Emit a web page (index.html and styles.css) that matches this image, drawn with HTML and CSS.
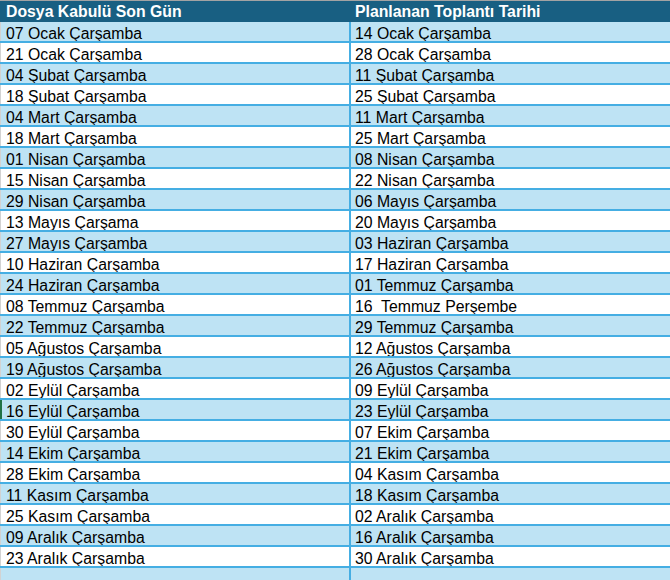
FILE: index.html
```html
<!DOCTYPE html>
<html lang="tr">
<head>
<meta charset="utf-8">
<link rel="stylesheet" href="styles.css">
</head>
<body>
<div class="sheet">
  <div class="row head">
    <div class="cell left">Dosya Kabulü Son Gün</div>
    <div class="cell right">Planlanan Toplantı Tarihi</div>
  </div>
  <div class="row alt"><div class="cell left">07 Ocak Çarşamba</div><div class="cell right">14 Ocak Çarşamba</div></div>
  <div class="row"><div class="cell left">21 Ocak Çarşamba</div><div class="cell right">28 Ocak Çarşamba</div></div>
  <div class="row alt"><div class="cell left">04 Şubat Çarşamba</div><div class="cell right">11 Şubat Çarşamba</div></div>
  <div class="row"><div class="cell left">18 Şubat Çarşamba</div><div class="cell right">25 Şubat Çarşamba</div></div>
  <div class="row alt"><div class="cell left">04 Mart Çarşamba</div><div class="cell right">11 Mart Çarşamba</div></div>
  <div class="row"><div class="cell left">18 Mart Çarşamba</div><div class="cell right">25 Mart Çarşamba</div></div>
  <div class="row alt"><div class="cell left">01 Nisan Çarşamba</div><div class="cell right">08 Nisan Çarşamba</div></div>
  <div class="row"><div class="cell left">15 Nisan Çarşamba</div><div class="cell right">22 Nisan Çarşamba</div></div>
  <div class="row alt"><div class="cell left">29 Nisan Çarşamba</div><div class="cell right">06 Mayıs Çarşamba</div></div>
  <div class="row"><div class="cell left">13 Mayıs Çarşama</div><div class="cell right">20 Mayıs Çarşamba</div></div>
  <div class="row alt"><div class="cell left">27 Mayıs Çarşamba</div><div class="cell right">03 Haziran Çarşamba</div></div>
  <div class="row"><div class="cell left">10 Haziran Çarşamba</div><div class="cell right">17 Haziran Çarşamba</div></div>
  <div class="row alt"><div class="cell left">24 Haziran Çarşamba</div><div class="cell right">01 Temmuz Çarşamba</div></div>
  <div class="row"><div class="cell left">08 Temmuz Çarşamba</div><div class="cell right">16&nbsp; Temmuz Perşembe</div></div>
  <div class="row alt"><div class="cell left">22 Temmuz Çarşamba</div><div class="cell right">29 Temmuz Çarşamba</div></div>
  <div class="row"><div class="cell left">05 Ağustos Çarşamba</div><div class="cell right">12 Ağustos Çarşamba</div></div>
  <div class="row alt"><div class="cell left">19 Ağustos Çarşamba</div><div class="cell right">26 Ağustos Çarşamba</div></div>
  <div class="row"><div class="cell left">02 Eylül Çarşamba</div><div class="cell right">09 Eylül Çarşamba</div></div>
  <div class="row alt"><div class="cell left active">16 Eylül Çarşamba</div><div class="cell right">23 Eylül Çarşamba</div></div>
  <div class="row"><div class="cell left">30 Eylül Çarşamba</div><div class="cell right">07 Ekim Çarşamba</div></div>
  <div class="row alt"><div class="cell left">14 Ekim Çarşamba</div><div class="cell right">21 Ekim Çarşamba</div></div>
  <div class="row"><div class="cell left">28 Ekim Çarşamba</div><div class="cell right">04 Kasım Çarşamba</div></div>
  <div class="row alt"><div class="cell left">11 Kasım Çarşamba</div><div class="cell right">18 Kasım Çarşamba</div></div>
  <div class="row"><div class="cell left">25 Kasım Çarşamba</div><div class="cell right">02 Aralık Çarşamba</div></div>
  <div class="row alt"><div class="cell left">09 Aralık Çarşamba</div><div class="cell right">16 Aralık Çarşamba</div></div>
  <div class="row"><div class="cell left">23 Aralık Çarşamba</div><div class="cell right">30 Aralık Çarşamba</div></div>
  <div class="row alt"><div class="cell left"></div><div class="cell right"></div></div>
</div>
</body>
</html>
```

FILE: styles.css
```css
html, body {
  margin: 0;
  padding: 0;
  background: #ffffff;
}

body {
  font-family: "Liberation Sans", Arial, sans-serif;
  font-size: 15.8px;
  color: #000000;
  overflow: hidden;
}

.sheet {
  width: 670px;
  border-top: 1px solid #a3a3a3;
}

.row {
  display: grid;
  grid-template-columns: 349px 1fr;
  height: 21px;
  box-sizing: border-box;
  border-bottom: 2px solid #45aee3;
  background: #ffffff;
}

.row.alt {
  background: #bee3f4;
}

.cell {
  white-space: pre;
  line-height: 19px;
  height: 19px;
  box-sizing: border-box;
  padding-top: 2px;
  overflow: hidden;
}

.cell.left {
  padding-left: 5px;
  border-left: 1px solid #d2d2d2;
}

.cell.left.active {
  border-left: 2px solid #217346;
  padding-left: 4px;
}

.cell.right {
  padding-left: 4px;
  border-left: 2px solid #45aee3;
}

.row.head {
  height: 21px;
  background: #185f82;
  border-bottom: none;
  color: #ffffff;
  font-weight: bold;
}

.row.head .cell {
  height: 21px;
  line-height: 21px;
  padding-top: 0;
  border-left: none;
}

.row.head .cell.left {
  padding-left: 6px;
}

.row.head .cell.right {
  padding-left: 6px;
}
```
